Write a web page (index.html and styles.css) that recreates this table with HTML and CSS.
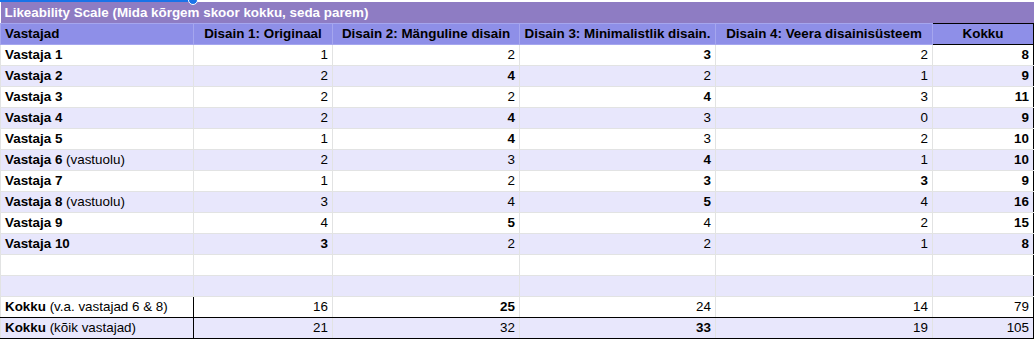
FILE: index.html
```html
<!DOCTYPE html>
<html lang="et">
<head>
<meta charset="utf-8">
<title>Likeability Scale</title>
<link rel="stylesheet" href="styles.css">
</head>
<body>
<div class="sheet">
  <div class="sel-line"></div>
  <div class="handle"></div>
  <table class="grid">
    <colgroup>
      <col class="c1"><col class="c2"><col class="c3"><col class="c4"><col class="c5"><col class="c6">
    </colgroup>
    <tr class="title"><td colspan="6">Likeability Scale (Mida kõrgem skoor kokku, seda parem)</td></tr>
    <tr class="head">
      <td class="name">Vastajad</td>
      <td>Disain 1: Originaal</td>
      <td>Disain 2: Mänguline disain</td>
      <td>Disain 3: Minimalistlik disain.</td>
      <td>Disain 4: Veera disainisüsteem</td>
      <td class="sum">Kokku</td>
    </tr>
    <tr><td class="name"><b>Vastaja 1</b></td><td>1</td><td>2</td><td><b>3</b></td><td>2</td><td class="sum"><b>8</b></td></tr>
    <tr class="alt"><td class="name"><b>Vastaja 2</b></td><td>2</td><td><b>4</b></td><td>2</td><td>1</td><td class="sum"><b>9</b></td></tr>
    <tr><td class="name"><b>Vastaja 3</b></td><td>2</td><td>2</td><td><b>4</b></td><td>3</td><td class="sum"><b>11</b></td></tr>
    <tr class="alt"><td class="name"><b>Vastaja 4</b></td><td>2</td><td><b>4</b></td><td>3</td><td>0</td><td class="sum"><b>9</b></td></tr>
    <tr><td class="name"><b>Vastaja 5</b></td><td>1</td><td><b>4</b></td><td>3</td><td>2</td><td class="sum"><b>10</b></td></tr>
    <tr class="alt"><td class="name"><b>Vastaja 6</b> (vastuolu)</td><td>2</td><td>3</td><td><b>4</b></td><td>1</td><td class="sum"><b>10</b></td></tr>
    <tr><td class="name"><b>Vastaja 7</b></td><td>1</td><td>2</td><td><b>3</b></td><td><b>3</b></td><td class="sum"><b>9</b></td></tr>
    <tr class="alt"><td class="name"><b>Vastaja 8</b> (vastuolu)</td><td>3</td><td>4</td><td><b>5</b></td><td>4</td><td class="sum"><b>16</b></td></tr>
    <tr><td class="name"><b>Vastaja 9</b></td><td>4</td><td><b>5</b></td><td>4</td><td>2</td><td class="sum"><b>15</b></td></tr>
    <tr class="alt"><td class="name"><b>Vastaja 10</b></td><td><b>3</b></td><td>2</td><td>2</td><td>1</td><td class="sum"><b>8</b></td></tr>
    <tr><td class="name"></td><td></td><td></td><td></td><td></td><td class="sum"></td></tr>
    <tr class="alt"><td class="name"></td><td></td><td></td><td></td><td></td><td class="sum"></td></tr>
    <tr class="total"><td class="name"><b>Kokku</b> (v.a. vastajad 6 &amp; 8)</td><td>16</td><td><b>25</b></td><td>24</td><td>14</td><td class="sum">79</td></tr>
    <tr class="total alt"><td class="name"><b>Kokku</b> (kõik vastajad)</td><td>21</td><td>32</td><td><b>33</b></td><td>19</td><td class="sum">105</td></tr>
  </table>
</div>
</body>
</html>
```
FILE: styles.css
```css
html, body {
  margin: 0;
  padding: 0;
  background: #ffffff;
}
body {
  font-family: "Liberation Sans", Arial, sans-serif;
  font-size: 13.4px;
  color: #000;
}
.sheet {
  position: relative;
  padding-top: 2px;
  width: 1036px;
  overflow: hidden;
}
.sel-line {
  position: absolute;
  left: 0;
  top: 0;
  width: 194px;
  height: 2px;
  background: #1a73e8;
}
.handle {
  position: absolute;
  left: 188px;
  top: -5px;
  width: 8px;
  height: 8px;
  border-radius: 50%;
  background: #1a73e8;
  border: 1px solid #fff;
  z-index: 2;
}
.grid {
  border-collapse: collapse;
  table-layout: fixed;
  width: 1034px;
}
.c1 { width: 193px; }
.c2 { width: 139px; }
.c3 { width: 187px; }
.c4 { width: 196px; }
.c5 { width: 217px; }
.c6 { width: 101px; }
.grid td {
  height: 21px;
  padding: 0 4px 0 4px;
  border: 1px solid #e2e3e3;
  white-space: nowrap;
  overflow: hidden;
  text-align: right;
  vertical-align: middle;
  line-height: 15px;
  box-sizing: border-box;
}
.grid td.name { text-align: left; }
.grid tr.alt td { background: #e8e7fc; }
.grid tr.title td {
  background: #8e7cc3;
  color: #fff;
  font-weight: bold;
  text-align: left;
  border: none;
}
.grid tr.head td {
  background: #8e8fe8;
  font-weight: bold;
  text-align: center;
  border-color: #a5a6ee;
}
.grid tr.head td.name { text-align: left; }
.grid tr.head td.sum { border: 1px solid #000; }
.grid td.sum {
  border-left: 1px solid #000;
  border-right: 1px solid #000;
}
.grid tr.total td {
  border-top: 1px solid #000;
  border-bottom: 1px solid #000;
}
.grid tr.total td.name { border-right: 1px solid #000; }
```
